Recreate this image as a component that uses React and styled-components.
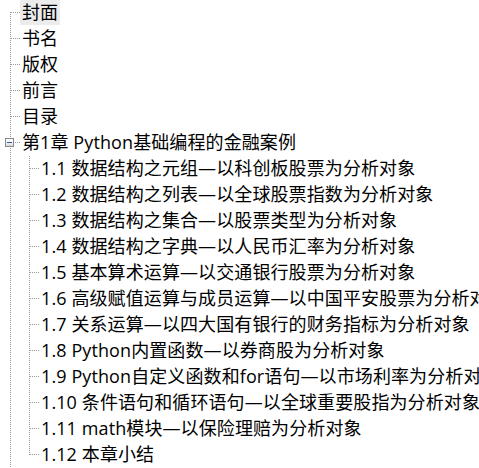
import React from "react";
import styled, { createGlobalStyle, css } from "styled-components";

const GlobalStyle = createGlobalStyle`
  html, body {
    margin: 0;
    padding: 0;
    background: #ffffff;
    overflow: hidden;
  }
  body {
    font-family: "Open Sans", "Noto Sans CJK SC", sans-serif;
    color: #000000;
  }
`;

const LINE = "#999999";

const Viewport = styled.div`
  width: 479px;
  height: 468px;
  overflow: hidden;
  background: #ffffff;
`;

const TreeList = styled.ul`
  list-style: none;
  margin: 0;
  padding: 0 0 0 ${(p) => p.$indent}px;
`;

const Node = styled.li`
  position: relative;
  padding-left: 10px;

  &::before {
    content: "";
    position: absolute;
    left: 1px;
    top: 12px;
    width: 9px;
    height: 1px;
    background-image: linear-gradient(to right, ${LINE} 50%, transparent 50%);
    background-size: 2px 1px;
  }

  &::after {
    content: "";
    position: absolute;
    left: 0;
    width: 1px;
    top: ${(p) => (p.$first ? "12px" : "0")};
    ${(p) =>
      p.$last
        ? css`
            height: ${p.$first ? 1 : 13}px;
          `
        : css`
            bottom: 0;
          `}
    background-image: linear-gradient(to bottom, ${LINE} 50%, transparent 50%);
    background-size: 1px 2px;
  }
`;

const Row = styled.div`
  height: 26px;
  display: flex;
  align-items: flex-start;
`;

const Label = styled.span`
  display: block;
  height: 25px;
  line-height: 24px;
  padding: 0 2px;
  font-size: 18px;
  letter-spacing: 0.1px;
  white-space: nowrap;
  background: ${(p) => (p.$selected ? "#ececec" : "transparent")};
`;

const ExpandBox = styled.span`
  position: absolute;
  z-index: 1;
  left: -5px;
  top: 8px;
  width: 9px;
  height: 9px;
  box-sizing: border-box;
  border: 1px solid #8a8a8a;
  background: linear-gradient(to bottom, #ffffff 0%, #f2f2f2 50%, #d8d8d8 100%);

  &::after {
    content: "";
    position: absolute;
    left: 1px;
    top: 3px;
    width: 5px;
    height: 1px;
    background: #2c5aa8;
  }
`;

const chapter1 = [
  "1.1 数据结构之元组—以科创板股票为分析对象",
  "1.2 数据结构之列表—以全球股票指数为分析对象",
  "1.3 数据结构之集合—以股票类型为分析对象",
  "1.4 数据结构之字典—以人民币汇率为分析对象",
  "1.5 基本算术运算—以交通银行股票为分析对象",
  "1.6 高级赋值运算与成员运算—以中国平安股票为分析对象",
  "1.7 关系运算—以四大国有银行的财务指标为分析对象",
  "1.8 Python内置函数—以券商股为分析对象",
  "1.9 Python自定义函数和for语句—以市场利率为分析对象",
  "1.10 条件语句和循环语句—以全球重要股指为分析对象",
  "1.11 math模块—以保险理赔为分析对象",
  "1.12 本章小结",
];

const roots = [
  { title: "封面", selected: true },
  { title: "书名" },
  { title: "版权" },
  { title: "前言" },
  { title: "目录" },
  { title: "第1章 Python基础编程的金融案例", children: chapter1, moreBelow: true },
];

export default function App() {
  return (
    <>
      <GlobalStyle />
      <Viewport>
        <TreeList $indent={10}>
          {roots.map((r, i) => (
            <Node
              key={r.title}
              $first={i === 0}
              $last={i === roots.length - 1 && !r.moreBelow}
            >
              {r.children && <ExpandBox />}
              <Row>
                <Label $selected={r.selected}>{r.title}</Label>
              </Row>
              {r.children && (
                <TreeList $indent={9}>
                  {r.children.map((c, j) => (
                    <Node key={c} $last={j === r.children.length - 1}>
                      <Row>
                        <Label>{c}</Label>
                      </Row>
                    </Node>
                  ))}
                </TreeList>
              )}
            </Node>
          ))}
        </TreeList>
      </Viewport>
    </>
  );
}
